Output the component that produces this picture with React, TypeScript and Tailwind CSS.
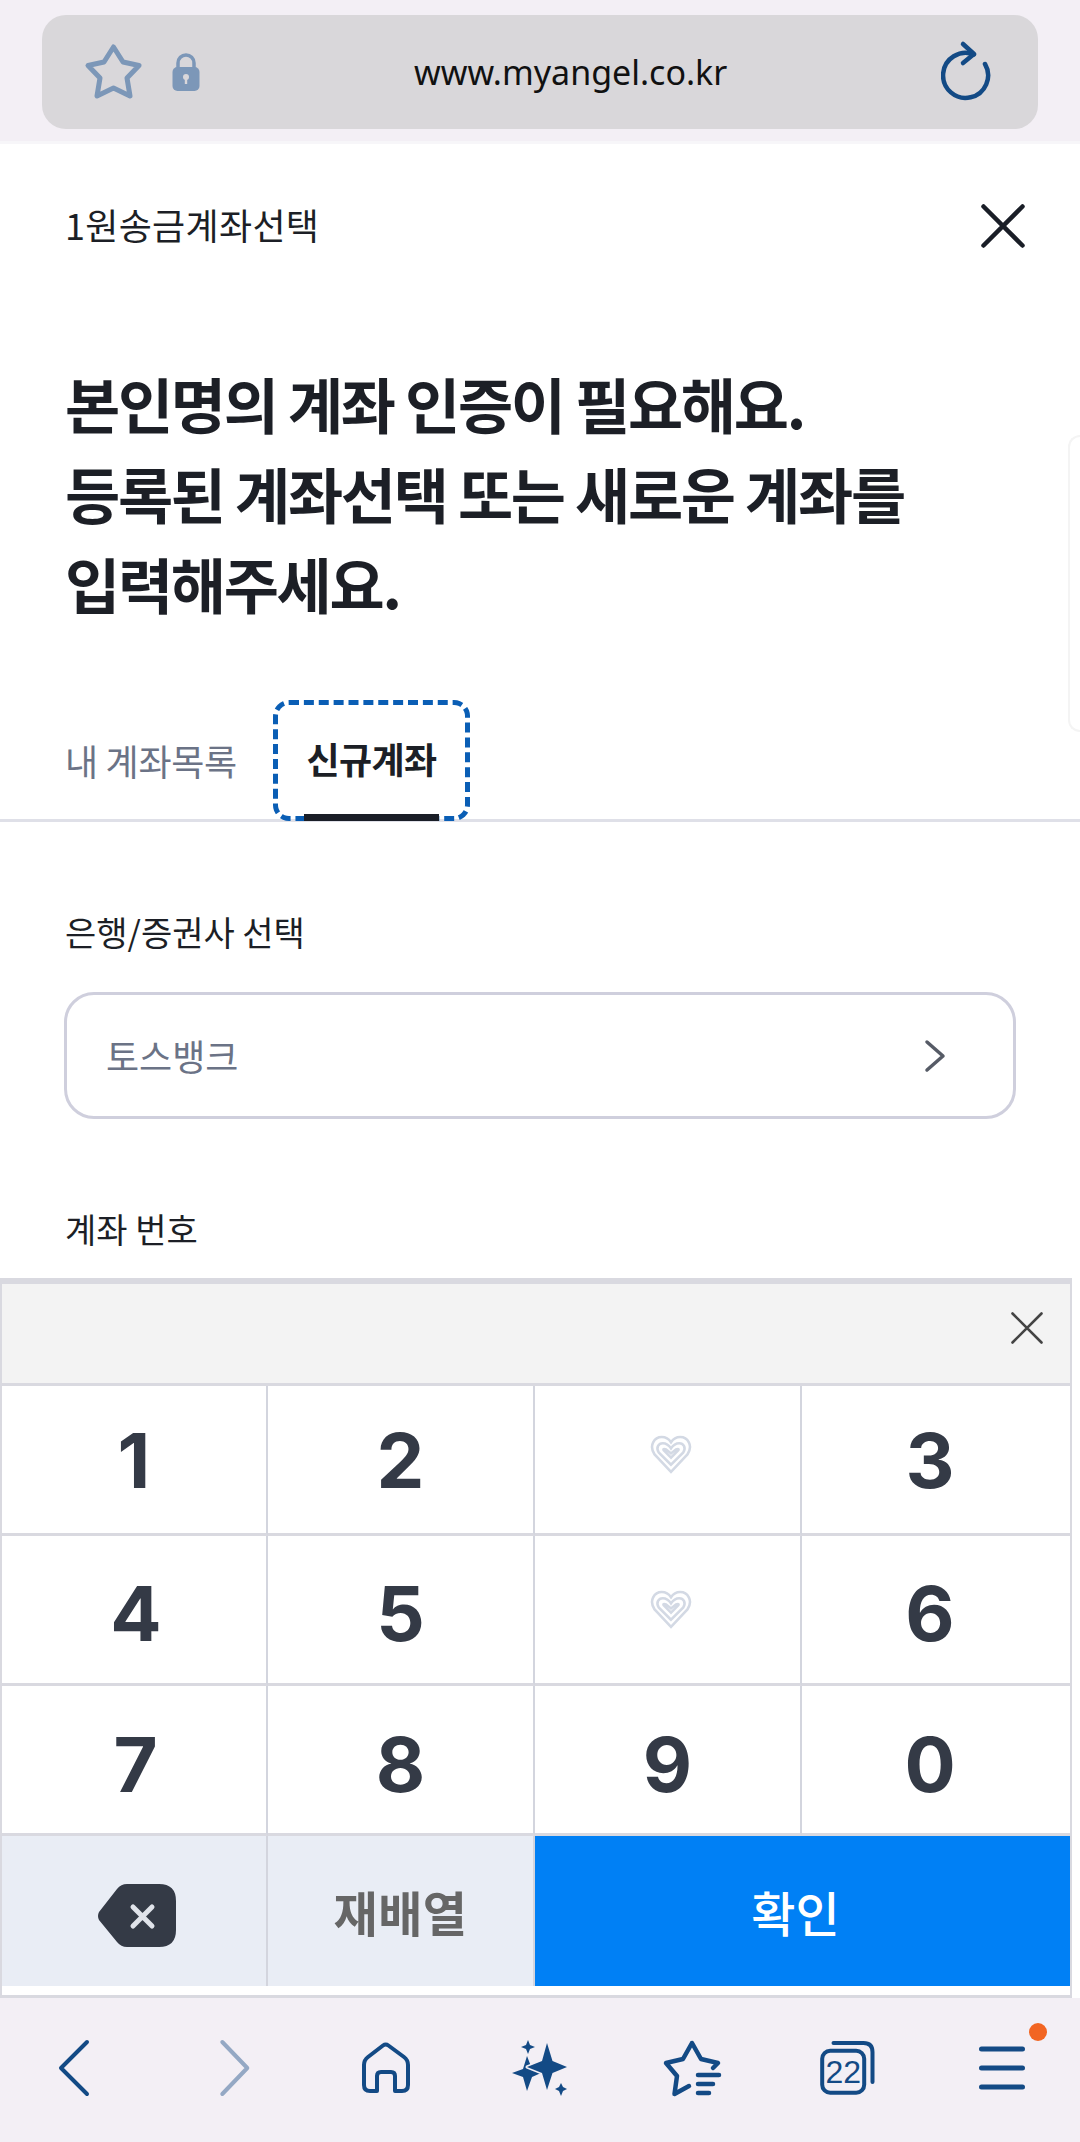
const navy = '#134a85';

function Heart({ className = '' }: { className?: string }) {
  return (
    <svg width="42" height="39" viewBox="0 0 40 38" fill="none" stroke="#d3d9e4" strokeWidth="2.5" className={`ml-[6px] blur-[0.5px] ${className}`}>
      <path d="M20 36 L4 19 C-2 10 4 2 11 2 C15 2 18 4 20 7 C22 4 25 2 29 2 C36 2 42 10 36 19 Z" />
      <path d="M20 29 L8 17 C5 12 8 8 12 8 C15 8 18 10 20 13 C22 10 25 8 28 8 C32 8 35 12 32 17 Z" />
      <path d="M20 22 L13 15 C12 14 13 13 15 14 L20 18 L25 14 C27 13 28 14 27 15 Z" />
    </svg>
  );
}

function Key({ value, className = '' }: { value: string; className?: string }) {
  return (
    <div className={`flex items-center justify-center text-[76px] font-bold text-[#343a46] font-['Inter',sans-serif] blur-[0.5px] ${className}`}>
      {value}
    </div>
  );
}

const cell = 'border-r-2 border-[#d3d5de]';
const rowLine = 'border-b-[3px] border-b-[#d9d9e0]';

export default function App() {
  return (
    <div className="w-[1080px] h-[2142px] flex flex-col overflow-hidden bg-white text-[#1c1f26] font-['Noto_Sans_CJK_KR','Noto_Sans',sans-serif]">
      {/* Browser address bar */}
      <div className="h-[144px] shrink-0 bg-[#f3eff5] border-b-[3px] border-[#f7f6f9] pt-[15px] pl-[42px] pr-[42px]">
        <div className="h-[114px] rounded-[24px] bg-[#d9d7da] flex items-center pl-[42px] pr-[37px]">
          <svg width="60" height="60" viewBox="0 0 60 60" fill="none" stroke="#7c97b8" strokeWidth="5" strokeLinejoin="round">
            <path d="M29.5 5 L39 20 L55 23.5 L43 36 L46 54 L29.5 46 L13 54 L16 36 L4 23.5 L20 20 Z" />
          </svg>
          <svg width="28" height="40" viewBox="0 0 28 40" className="ml-[28px]">
            <path d="M6 16 V11 a8 8 0 0 1 16 0 V16" fill="none" stroke="#7c97b8" strokeWidth="3.5" />
            <rect x="0.5" y="15" width="27" height="24" rx="5" fill="#7c97b8" />
            <circle cx="14" cy="25" r="3" fill="#d9d7da" />
            <rect x="12.8" y="25" width="2.4" height="7" fill="#d9d7da" />
          </svg>
          <span className="ml-[214px] text-[34px] leading-none text-[#111] font-['Noto_Sans',sans-serif]">www.myangel.co.kr</span>
          <svg width="60" height="64" viewBox="0 0 60 64" fill="none" stroke={navy} strokeWidth="4.5" strokeLinecap="round" strokeLinejoin="round" className="ml-auto">
            <path d="M44 24 A22.5 22.5 0 1 1 33 14.5" />
            <path d="M22 4 L33 14 L22 23" />
          </svg>
        </div>
      </div>

      {/* Page content */}
      <div className="relative h-[1134px] shrink-0 overflow-hidden">
        <div className="absolute right-0 top-[291px] w-[12px] h-[297px] rounded-l-[12px] border-2 border-r-0 border-[#f4f4f4]" />

        <div className="h-[164px] flex items-center justify-between pl-[65px] pr-[55px]">
          <span className="text-[36px] leading-none tracking-[0.3px] mb-[5px]">1원송금계좌선택</span>
          <svg width="44" height="44" viewBox="0 0 44 44" fill="none" stroke="#1a1e27" strokeWidth="4.5" strokeLinecap="round">
            <path d="M2.5 2.5 L41.5 41.5 M41.5 2.5 L2.5 41.5" />
          </svg>
        </div>

        <h1 className="mt-[50px] pl-[65px] text-[60px] leading-[90px] font-bold tracking-[-2.3px]">
          본인명의 계좌 인증이 필요해요.
          <br />
          등록된 계좌선택 또는 새로운 계좌를
          <br />
          입력해주세요.
        </h1>

        <div className="mt-[73px] h-[121px] flex items-center pl-[65px] border-b-[3px] border-[#dfe0e8]">
          <span className="w-[208px] text-[36px] text-[#6b7386] tracking-[-0.3px]">내 계좌목록</span>
          <div className="relative h-[121px] w-[197px] rounded-[16px] border-[5px] border-dashed border-[#0a5eb5] flex items-center justify-center">
            <span className="text-[36px] font-bold tracking-[-0.6px] mb-[4px]">신규계좌</span>
            <span className="absolute left-[26px] -bottom-[5px] w-[135px] h-[7px] bg-[#1a1e27]" />
          </div>
        </div>

        <div className="mt-[86px] pl-[65px] h-[50px] pb-[4px] flex items-center text-[34px]">은행/증권사 선택</div>
        <div className="mt-[34px] ml-[64px] w-[952px] h-[127px] rounded-[30px] border-[3px] border-[#cfcfdd] flex items-center justify-between pl-[39px] pr-[66px]">
          <span className="text-[36px] text-[#6b7386] mb-[2px]">토스뱅크</span>
          <svg width="24" height="34" viewBox="0 0 24 34" fill="none" stroke="#565b66" strokeWidth="3.5" strokeLinecap="round" strokeLinejoin="round">
            <path d="M4 3 L20 17 L4 31" />
          </svg>
        </div>
        <div className="mt-[85px] pl-[65px] h-[50px] pb-[2px] flex items-center text-[34px]">계좌 번호</div>
      </div>

      {/* Secure keypad */}
      <div className="h-[720px] w-[1072px] shrink-0 flex flex-col bg-white border-t-[6px] border-x-2 border-b-[3px] border-[#d9d9e0]">
        <div className="h-[102px] shrink-0 bg-[#f3f3f3] border-b-[3px] border-[#d9d9e0] flex items-center justify-end pr-[27px]">
          <svg width="32" height="32" viewBox="0 0 32 32" fill="none" stroke="#444" strokeWidth="2.6" strokeLinecap="round" className="mb-[12px]">
            <path d="M1.5 1.5 L30.5 30.5 M30.5 1.5 L1.5 30.5" />
          </svg>
        </div>
        <div className="grid grid-cols-[266px_267px_267px_1fr] auto-rows-[150px]">
          <Key value="1" className={`${cell} ${rowLine}`} />
          <Key value="2" className={`${cell} ${rowLine}`} />
          <div className={`${cell} ${rowLine} flex items-center justify-center`}><Heart className="mb-[10px]" /></div>
          <Key value="3" className={`pr-[12px] ${rowLine}`} />

          <Key value="4" className={`${cell} ${rowLine} pt-[6px] pl-[4px]`} />
          <Key value="5" className={`${cell} ${rowLine} pt-[6px]`} />
          <div className={`${cell} ${rowLine} flex items-center justify-center`}><Heart /></div>
          <Key value="6" className={`pr-[12px] ${rowLine} pt-[6px]`} />

          <Key value="7" className={`${cell} ${rowLine} pt-[8px] pl-[3px]`} />
          <Key value="8" className={`${cell} ${rowLine} pt-[8px]`} />
          <Key value="9" className={`${cell} ${rowLine} pt-[8px]`} />
          <Key value="0" className={`pr-[12px] ${rowLine} pt-[8px]`} />

          <div className={`${cell} bg-[#e9edf5] flex items-center justify-center`}>
            <svg width="80" height="64" viewBox="0 0 80 64" className="ml-[6px] mt-[10px]">
              <path d="M30 0 H62 Q79 0 79 17 V46 Q79 63 62 63 H30 Q24 63 20 58 L2 36 Q0 32 2 28 L20 5 Q24 0 30 0 Z" fill="#343a46" />
              <path d="M36 23 L55 42 M55 23 L36 42" stroke="#e0e3ea" strokeWidth="5" strokeLinecap="round" />
            </svg>
          </div>
          <div className={`${cell} bg-[#e9edf5] flex items-center justify-center text-[48px] tracking-[0.5px] font-bold text-[#666] blur-[0.5px]`}>재배열</div>
          <div className="col-span-2 bg-[#0080f5] flex items-center justify-center pr-[14px] text-[48px] font-medium text-white">확인</div>
        </div>
      </div>

      {/* Browser bottom nav */}
      <div className="flex-1 bg-[#f3eff5] pt-[40px] px-[44px] flex justify-between items-start">
        <svg width="60" height="60" viewBox="0 0 60 60" fill="none" stroke={navy} strokeWidth="4" strokeLinecap="round" strokeLinejoin="round">
          <path d="M43 4 L17 30 L43 56" />
        </svg>
        <svg width="60" height="60" viewBox="0 0 60 60" fill="none" stroke="#94a8c4" strokeWidth="4" strokeLinecap="round" strokeLinejoin="round">
          <path d="M23.3 4 L48.3 30 L23.3 56" />
        </svg>
        <svg width="60" height="60" viewBox="1 0 60 60" fill="none" stroke={navy} strokeWidth="4" strokeLinejoin="round" className="overflow-visible">
          <path d="M29 7.5 Q31.7 5.5 34.4 7.5 L50 19 Q54 22 54 27 V47 Q54 53 48 53 H41 V38 Q41 34 37 34 H27 Q23 34 23 38 V53 H16 Q10 53 10 47 V27 Q10 22 14 19 Z" />
        </svg>
        <svg width="60" height="60" viewBox="1 0 60 60" fill={navy} className="overflow-visible">
          <path d="M18 18 L23 31 L32 35 L23 39 L18 53 L14 39 L3 35 L14 31 Z" />
          <path d="M38 5 L43.5 23 L58 29 L43.5 35 L38 52 L33 35 L18 29 L33 23 Z" stroke="#f3eff5" strokeWidth="3" paintOrder="stroke" strokeLinejoin="round" />
          <path d="M19 2 L21 7 L26 9 L21 11 L19 16 L17 11 L12 9 L17 7 Z" />
          <path d="M52 45 L54 49 L58 51 L54 53 L52 58 L50 53 L46 51 L50 49 Z" />
        </svg>
        <svg width="60" height="60" viewBox="3 0 60 60" fill="none" stroke={navy} strokeWidth="4.5" strokeLinecap="round" strokeLinejoin="round" className="overflow-visible">
          <path d="M51 30 L56 25 L39 21 L30 5 L21 21 L4 25 L15 38 L12.5 56 L27 48" />
          <path d="M36 37 H57 M36 46 H51 M36 55 H47" />
        </svg>
        <svg width="60" height="60" viewBox="3.5 0 60 60" fill="none" stroke={navy} strokeWidth="4" strokeLinecap="round" className="overflow-visible">
          <rect x="4.7" y="12.7" width="42" height="42" rx="8" />
          <path d="M16 5 H46 Q55 5 55 14 V44" />
          <text x="25.7" y="45" textAnchor="middle" fill={navy} stroke="none" fontSize="32" className="font-['Liberation_Sans',sans-serif]">22</text>
        </svg>
        <div className="relative w-[60px] h-[60px]">
          <svg width="60" height="60" viewBox="4 0 60 60" fill="none" stroke={navy} strokeWidth="5" strokeLinecap="round" className="overflow-visible">
            <path d="M9.5 11 H50.5 M9.5 30 H50.5 M9.5 49 H50.5" />
          </svg>
          <span className="absolute left-[53px] -top-[15px] w-[18px] h-[18px] rounded-full bg-[#f26522]" />
        </div>
      </div>
    </div>
  );
}
